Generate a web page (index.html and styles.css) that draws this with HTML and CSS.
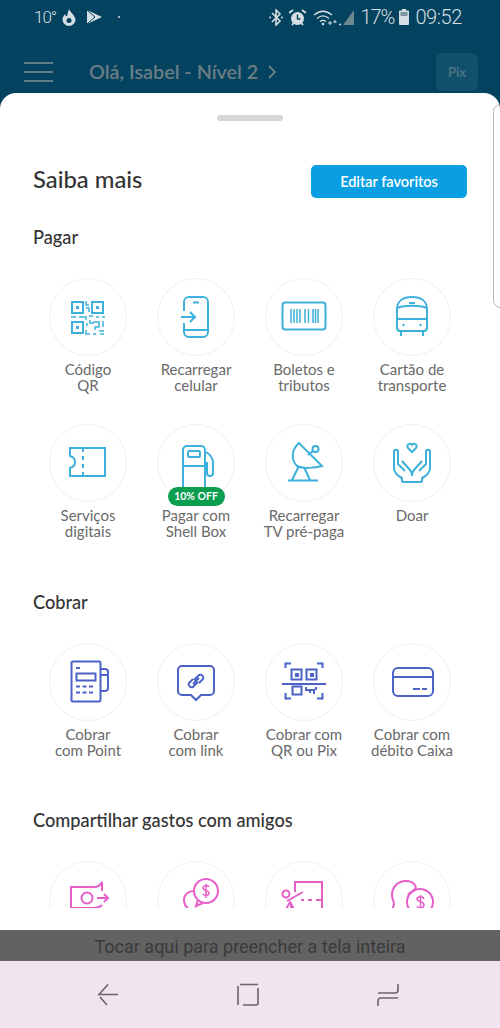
FILE: index.html
```html
<!DOCTYPE html>
<html lang="en">
<head>
    <meta charset="UTF-8">
    <meta name="viewport" content="width=device-width, initial-scale=1.0">
    <title>Saiba mais</title>
    <link rel="stylesheet" href="styles.css">
</head>
<body>
    <div class="screen">
        <header class="top">
            <div class="status">
                <span class="temp">10°</span>
                <svg class="st-flame" viewBox="0 0 14 17"><path d="M7 0c1 3 6 6 6.500 10.500a6.500 6.500 0 0 1-13 0C.5 8 2 6.500 3 5c.3 1.500 1 2 2 2.500C5.500 5 6 3 7 0z" fill="#d5dee2"/><circle cx="7" cy="11.500" r="2.500" fill="#03435f"/></svg>
                <svg class="st-play" viewBox="0 0 15 14"><path d="M0 0l15 7-15 7z" fill="#d5dee2"/><path d="M0 0l8 7-8 7" fill="none" stroke="#03435f"/></svg>
                <span class="st-dot"></span>
                <span class="spacer"></span>
                <svg class="st-bt" viewBox="0 0 14 17"><path d="M3 4l8 8-4 4V1l4 4-8 8" fill="none" stroke="#d5dee2" stroke-width="1.600"/><circle cx="1" cy="8.500" r="1" fill="#d5dee2"/><circle cx="13" cy="8.500" r="1" fill="#d5dee2"/></svg>
                <svg class="st-alarm" viewBox="0 0 17 17"><circle cx="8.500" cy="9.500" r="6.500" fill="#d5dee2"/><path d="M8.500 5.500v4.500h3" fill="none" stroke="#03435f" stroke-width="1.400"/><path d="M0 4l4-3M17 4l-4-3M3 16l1.500-2M14 16l-1.500-2" stroke="#d5dee2" stroke-width="1.800"/></svg>
                <svg class="st-wifi" viewBox="0 0 24 17"><path d="M1 6c6-5 12-5 18 0M4 9.500c4-3.500 8-3.500 12 0M7 12.500c2-1.500 4-1.500 6 0" fill="none" stroke="#d5dee2" stroke-width="1.300"/><circle cx="10" cy="15" r="1.300" fill="#d5dee2"/><path d="M15 14h4M17 12v4M20 13h3.500M22 11v3" stroke="#d5dee2"/></svg>
                <svg class="st-signal" viewBox="0 0 15 17"><path d="M15 1v15H4z" fill="#6f8791"/><circle cx="1" cy="15.500" r="1" fill="#d5dee2"/></svg>
                <span class="pct">17%</span>
                <svg class="st-batt" viewBox="0 0 10 16"><path d="M3 0h4v1.500h2a1 1 0 0 1 1 1V15a1 1 0 0 1-1 1H1a1 1 0 0 1-1-1V2.500a1 1 0 0 1 1-1h2z" fill="#d5dee2"/><rect x="1.500" y="3" width="7" height="4" fill="#7d959f"/></svg>
                <span class="clock">09:52</span>
            </div>
            <div class="appbar">
                <div class="burger"><span></span><span></span><span></span></div>
                <span class="hello">Olá, Isabel - Nível 2</span>
                <svg class="chev" viewBox="0 0 9 14"><path d="M1 1l6 6-6 6" fill="none" stroke="#6f8088" stroke-width="1.800"/></svg>
                <span class="spacer"></span>
                <div class="pix">Pix</div>
            </div>
        </header>

        <main class="sheet">
            <div class="handle"></div>
            <div class="side-tab"></div>
            <div class="sheet-head">
                <h1>Saiba mais</h1>
                <button class="edit-btn">Editar favoritos</button>
            </div>

            <section class="group">
                <h2>Pagar</h2>
                <div class="tiles blue">
                    <div class="tile">
                        <div class="ring">
                            <svg viewBox="0 0 78 78"><path d="M23 24h11v11H23zM43 24h11v11H43zM23 44h11v11H23z"/><path d="M27 28h3v3h-3zM47 28h3v3h-3zM27 48h3v3h-3z" class="solid"/><path d="M37 23v4h3M37 30h3v4M22 39h5M30 39h7v3M40 38h4M47 39h3M53 39h3M38 45v3M37 52v4h4M41 42v3h4M44 44h6v5h-4v3M50 53h5M54 43v6M44 56h3M51 56h4" class="thin"/></svg>
                        </div>
                        <p>Código<br>QR</p>
                    </div>
                    <div class="tile">
                        <div class="ring">
                            <svg viewBox="0 0 78 78"><path d="M27 33v-9a5 5 0 0 1 5-5h14a5 5 0 0 1 5 5v30a5 5 0 0 1-5 5H32a5 5 0 0 1-5-5v-9M36 24.500h6M27 52h24M24 39h14M33 34l5 5-5 5"/></svg>
                        </div>
                        <p>Recarregar<br>celular</p>
                    </div>
                    <div class="tile">
                        <div class="ring">
                            <svg viewBox="0 0 78 78"><rect x="17.500" y="24.500" width="43" height="27" rx="3"/><path d="M26 31v14M29 31v14M32 31v14M35 31v14M40 31v14M43.500 31v14M48 31v14M50.500 31v14M53 31v14" class="thin"/></svg>
                        </div>
                        <p>Boletos e<br>tributos</p>
                    </div>
                    <div class="tile">
                        <div class="ring">
                            <svg viewBox="0 0 78 78"><path d="M24 50V31c0-8 6-12 15-12s15 4 15 12v19a3 3 0 0 1-3 3H27a3 3 0 0 1-3-3zM24 30c8-3 22-3 30 0M24 41h30M36 25h6M28 53v5M50 53v5"/><circle cx="30.500" cy="47" r="1.200" class="solid"/><circle cx="47.500" cy="47" r="1.200" class="solid"/></svg>
                        </div>
                        <p>Cartão de<br>transporte</p>
                    </div>
                    <div class="tile">
                        <div class="ring">
                            <svg viewBox="0 0 78 78"><path d="M21 24h35v28H21v-8c4-1 5-3 5-6s-1-5-5-6zM34 24v4M34 32v4M34 40v4M34 48v4"/></svg>
                        </div>
                        <p>Serviços<br>digitais</p>
                    </div>
                    <div class="tile">
                        <div class="ring">
                            <svg viewBox="0 0 78 78"><path d="M26 64V26a4 4 0 0 1 4-4h14a4 4 0 0 1 4 4v38M26 42h22"/><rect x="31" y="27" width="12" height="6" rx="1.500"/><path d="M49 28c5 3 7 6 7 11v10c0 4-6 4-6 0V38"/></svg>
                            <span class="badge">10% OFF</span>
                        </div>
                        <p>Pagar com<br>Shell Box</p>
                    </div>
                    <div class="tile">
                        <div class="ring">
                            <svg viewBox="0 0 78 78"><path d="M34 19c-8 7-8 17-2 23 6 3 18 2 25 0zM43 31l5-4M34 42l-7 14M39 43l6 13M23 56.500h30"/><circle cx="50.500" cy="25" r="3"/></svg>
                        </div>
                        <p>Recarregar<br>TV pré-paga</p>
                    </div>
                    <div class="tile">
                        <div class="ring">
                            <svg viewBox="0 0 78 78"><path d="M39 28l-4-4c-2-3 2-6 4-3 2-3 6 0 4 3zM29 58v-4c-4-2-8-5-8-10V28c0-3 4-3 4 0v12l7 7M29 37l8 9c2 2 2 4 2 6M49 58v-4c4-2 8-5 8-10V28c0-3-4-3-4 0v12l-7 7M49 37l-8 9c-2 2-2 4-2 6M29 58h20"/></svg>
                        </div>
                        <p>Doar</p>
                    </div>
                </div>
            </section>

            <section class="group">
                <h2>Cobrar</h2>
                <div class="tiles indigo">
                    <div class="tile">
                        <div class="ring">
                            <svg viewBox="0 0 78 78"><rect x="22.500" y="18.500" width="29" height="40" rx="1.500"/><rect x="27.500" y="30.500" width="19" height="7"/><path d="M27 25h4M27 43.500h19M27 49.500h19" stroke-dasharray="4 2.500"/><path d="M52 26h4a3 3 0 0 1 3 3v16a3 3 0 0 1-3 3h-4M52 32h7"/></svg>
                        </div>
                        <p>Cobrar<br>com Point</p>
                    </div>
                    <div class="tile">
                        <div class="ring">
                            <svg viewBox="0 0 78 78"><path d="M25 23h28a4 4 0 0 1 4 4v21a4 4 0 0 1-4 4h-9l-5 5-5-5h-9a4 4 0 0 1-4-4V27a4 4 0 0 1 4-4z"/><path d="M37 37l5-5a3 3 0 0 1 4 4l-4 4M41 39l-5 5a3 3 0 0 1-4-4l4-4M36 41l6-6"/></svg>
                        </div>
                        <p>Cobrar<br>com link</p>
                    </div>
                    <div class="tile">
                        <div class="ring">
                            <svg viewBox="0 0 78 78"><path d="M20.500 25v-4.500H26M52 20.500h5.500V25M20.500 50v5.500H26M52 55.500h5.500V50M17 41h44"/><rect x="26.500" y="26.500" width="10" height="10"/><rect x="41.500" y="26.500" width="10" height="10"/><rect x="27.500" y="43.500" width="9" height="8"/><path d="M30 30h4v4h-4zM45 30h4v4h-4z" class="solid"/><path d="M41 44v3h8v4M45 47v3M51 44v3"/></svg>
                        </div>
                        <p>Cobrar com<br>QR ou Pix</p>
                    </div>
                    <div class="tile">
                        <div class="ring">
                            <svg viewBox="0 0 78 78"><rect x="20" y="25" width="40" height="28" rx="5"/><path d="M20 34h40M40 46h7M49 46h5"/></svg>
                        </div>
                        <p>Cobrar com<br>débito Caixa</p>
                    </div>
                </div>
            </section>

            <section class="group">
                <h2>Compartilhar gastos com amigos</h2>
                <div class="tiles pink">
                    <div class="tile">
                        <div class="ring">
                            <svg viewBox="0 0 78 78"><path d="M53 30V21c-2 4-5 5-8 5H22v21h23c3 0 5 0 8-3M48 37h11M55 33l4 4-4 4"/><circle cx="38" cy="37" r="5.500"/></svg>
                        </div>
                    </div>
                    <div class="tile">
                        <div class="ring">
                            <svg viewBox="0 0 78 78"><circle cx="49" cy="30" r="12"/><path d="M41 39l-2 6 7-3M37 30c-6 0-10 4-10 9 0 3 1 6 4 8M41 47l-3 3"/><path d="M52 26c-1-2-6-2-6 1s6 2 6 5-5 3-6 1M49 23v14" class="thin"/></svg>
                        </div>
                    </div>
                    <div class="tile">
                        <div class="ring">
                            <svg viewBox="0 0 78 78"><path d="M30 31V21h27v26M36 39h3M43 39h4M51 39h7M22 40l16-9M20 50l5-9 5 9M26 42v8"/><circle cx="21" cy="33" r="3.500"/></svg>
                        </div>
                    </div>
                    <div class="tile">
                        <div class="ring">
                            <svg viewBox="0 0 78 78"><circle cx="47" cy="41" r="13"/><path d="M35 34c2-3 1 0 7-6 2-1 0-8-9-8-8 0-14 6-14 14 0 4 2 7 2 9l-2 7 10-1"/><path d="M51 38c-1-3-7-3-7 0s7 2 7 6-6 3-7 1M47.500 34v15" class="thin"/></svg>
                        </div>
                    </div>
                </div>
            </section>
        </main>

        <div class="fill-bar">Tocar aqui para preencher a tela inteira</div>

        <nav class="navbar">
            <svg viewBox="0 0 22 24"><path d="M21 11.500H2l9-10M3 14l7 8"/></svg>
            <svg viewBox="0 0 22 24"><path d="M3 1.500h18M1 3v19M6 22h13c1.500 0 2-.5 2-2V5"/></svg>
            <svg viewBox="0 0 22 24"><path d="M21 1v6c0 2-1 3-3 3H1M21 15H4c-2 0-3 1-3 3v5"/></svg>
        </nav>
    </div>
</body>
</html>
```

FILE: styles.css
```css
* {
    box-sizing: border-box;
}
body {
    margin: 0;
    font-family: 'Lato', sans-serif;
    background-color: #fff;
}
.screen {
    width: 500px;
    height: 1028px;
    display: flex;
    flex-direction: column;
    overflow: hidden;
    background-color: #03435f;
}
.spacer {
    flex: 1;
}
.top {
    height: 93px;
    flex: none;
}
.status {
    height: 34px;
    display: flex;
    align-items: center;
    padding: 0 38px 0 34px;
    font-family: 'Roboto', sans-serif;
    font-weight: 300;
    color: #d5dee2;
}
.temp {
    font-size: 17px;
    letter-spacing: -1px;
    width: 28px;
}
.status svg {
    flex: none;
}
.st-flame {
    width: 14px;
    height: 17px;
    margin-right: 11px;
}
.st-play {
    width: 15px;
    height: 14px;
}
.st-dot {
    width: 2px;
    height: 2px;
    border-radius: 50%;
    background-color: #d5dee2;
    margin-left: 16px;
}
.st-bt {
    width: 14px;
    height: 17px;
}
.st-alarm {
    width: 17px;
    height: 17px;
    margin-left: 6px;
}
.st-wifi {
    width: 24px;
    height: 17px;
    margin-left: 7px;
}
.st-signal {
    width: 15px;
    height: 17px;
    margin-left: 2px;
}
.pct {
    font-size: 20px;
    letter-spacing: -1px;
    margin-left: 6px;
    width: 39px;
}
.st-batt {
    width: 10px;
    height: 16px;
}
.clock {
    font-size: 20px;
    letter-spacing: -0.4px;
    margin-left: 6px;
}
.appbar {
    display: flex;
    align-items: center;
    height: 38px;
    margin-top: 19px;
    padding: 0 22px 0 24px;
}
.burger {
    width: 29px;
    display: flex;
    flex-direction: column;
    gap: 7.5px;
}
.burger span {
    height: 1.5px;
    background-color: #5f7d8b;
}
.hello {
    margin: 0 0 3px 36px;
    font-size: 19.8px;
    font-weight: 600;
    color: #6c7d85;
}
.chev {
    width: 9px;
    height: 14px;
    margin-left: 10px;
}
.pix {
    width: 42px;
    height: 38px;
    border-radius: 6px;
    background-color: #11506b;
    color: #4b7283;
    font-size: 13px;
    font-weight: 700;
    display: flex;
    align-items: center;
    justify-content: center;
}
.sheet {
    position: relative;
    height: 837px;
    flex: none;
    padding-top: 22px;
    overflow: hidden;
    background-color: #fff;
    border-bottom: 22px solid #fff;
    border-radius: 16px 16px 0 0;
}
.handle {
    width: 66px;
    height: 6px;
    margin: 0 auto;
    border-radius: 3px;
    background-color: #d6d6d6;
}
.side-tab {
    position: absolute;
    top: 11px;
    right: -8px;
    width: 15px;
    height: 204px;
    border: 1px solid #b5b5b5;
    border-radius: 8px;
}
.sheet-head {
    display: flex;
    justify-content: space-between;
    align-items: center;
    height: 33px;
    padding: 0 33px;
    margin-top: 44px;
}
h1 {
    margin: 0 0 6px;
    font-size: 23.8px;
    font-weight: 500;
    color: #333;
}
.edit-btn {
    width: 156px;
    height: 33px;
    border: none;
    border-radius: 5px;
    background-color: #0a9fe3;
    color: #fff;
    font-family: inherit;
    font-size: 14.5px;
    font-weight: 600;
}
.group {
    margin-bottom: 52px;
}
.sheet-head + .group {
    margin-top: 29px;
    margin-bottom: 53px;
}
h2 {
    margin: 0 0 31px 33px;
    font-size: 18.2px;
    line-height: 20px;
    font-weight: 500;
    color: #333;
}
.tiles {
    display: grid;
    grid-template-columns: repeat(4, 108px);
    row-gap: 31px;
    padding-left: 34px;
}
.tile {
    text-align: center;
}
.tile p {
    margin: 5px 0 0;
    font-size: 15px;
    line-height: 16px;
    color: #6a6a6a;
}
.ring {
    position: relative;
    width: 78px;
    height: 78px;
    margin: 0 auto;
    border: 1.5px solid #efefef;
    border-radius: 50%;
}
.ring svg {
    position: absolute;
    top: -1.5px;
    left: -1.5px;
    width: 78px;
    height: 78px;
    fill: none;
    stroke-width: 2;
}
.ring .solid {
    stroke: none;
}
.ring .thin {
    stroke-width: 1.5;
}
.blue svg {
    stroke: #3db0dc;
}
.blue .solid {
    fill: #3db0dc;
}
.indigo svg {
    stroke: #4b62c6;
}
.indigo .solid {
    fill: #4b62c6;
}
.pink svg {
    stroke: #e65fc9;
}
.badge {
    position: absolute;
    top: 61.5px;
    left: 9.5px;
    width: 57px;
    height: 19px;
    border-radius: 10px;
    background-color: #0b9e4f;
    color: #fff;
    font-size: 10.5px;
    font-weight: 700;
    line-height: 19px;
}
.fill-bar {
    height: 31px;
    flex: none;
    background-color: #626262;
    color: #3a3a3a;
    font-family: 'Roboto', sans-serif;
    font-size: 18px;
    line-height: 34px;
    text-align: center;
}
.navbar {
    height: 67px;
    flex: none;
    display: flex;
    justify-content: center;
    align-items: center;
    gap: 118px;
    padding-right: 4px;
    background-color: #f0e4ef;
}
.navbar svg {
    width: 22px;
    height: 24px;
    fill: none;
    stroke: #6e626e;
    stroke-width: 1.6;
}
```
